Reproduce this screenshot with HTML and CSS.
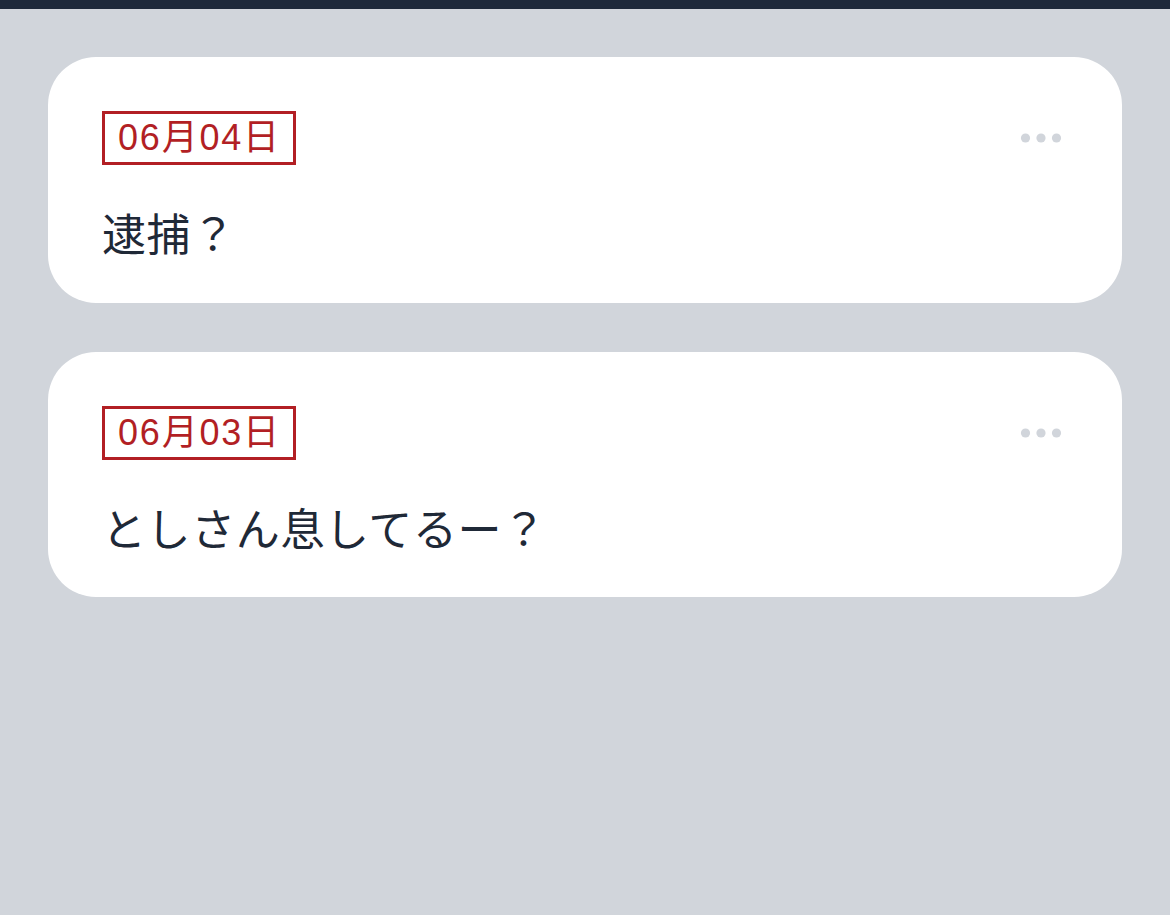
FILE: index.html
```html
<!DOCTYPE html>
<html lang="ja">
<head>
<meta charset="utf-8">
<title>メモ</title>
<link rel="stylesheet" href="styles.css">
</head>
<body>
<div class="topbar"></div>
<main class="list">
  <article class="card">
    <div class="card-head">
      <span class="date">06月04日</span>
      <button class="more" aria-label="more">
        <svg width="44" height="12" viewBox="0 0 44 12"><circle cx="5.5" cy="6" r="4.6"/><circle cx="21" cy="6" r="4.6"/><circle cx="36.5" cy="6" r="4.6"/></svg>
      </button>
    </div>
    <p class="body">逮捕？</p>
  </article>
  <article class="card">
    <div class="card-head">
      <span class="date">06月03日</span>
      <button class="more" aria-label="more">
        <svg width="44" height="12" viewBox="0 0 44 12"><circle cx="5.5" cy="6" r="4.6"/><circle cx="21" cy="6" r="4.6"/><circle cx="36.5" cy="6" r="4.6"/></svg>
      </button>
    </div>
    <p class="body">としさん息してるー？</p>
  </article>
</main>
</body>
</html>
```
FILE: styles.css
```css
html, body {
  margin: 0;
  padding: 0;
}
body {
  background: #d1d5db;
  font-family: "Noto Sans CJK JP", "Noto Sans", sans-serif;
  color: #1f2937;
  min-height: 915px;
}
.topbar {
  height: 9px;
  background: #1e293b;
}
.list {
  display: flex;
  flex-direction: column;
  gap: 49px;
  padding: 48px 48px 0 48px;
}
.card {
  background: #ffffff;
  border-radius: 48px;
  padding: 54px 58px 37.5px 54px;
}
.card-head {
  display: flex;
  justify-content: space-between;
  align-items: center;
}
.date {
  display: inline-block;
  border: 3px solid #b21f24;
  color: #b21f24;
  font-family: "Liberation Sans", "Noto Sans CJK JP", sans-serif;
  font-size: 36px;
  line-height: 48px;
  padding: 0 12px 0 13px;
  letter-spacing: 1.8px;
}
.more {
  border: 0;
  background: none;
  padding: 0;
  display: flex;
  fill: #d1d5db;
}
.body {
  margin: 34px 0 0 0;
  font-size: 44px;
  line-height: 66px;
  letter-spacing: 0.6px;
}
```
